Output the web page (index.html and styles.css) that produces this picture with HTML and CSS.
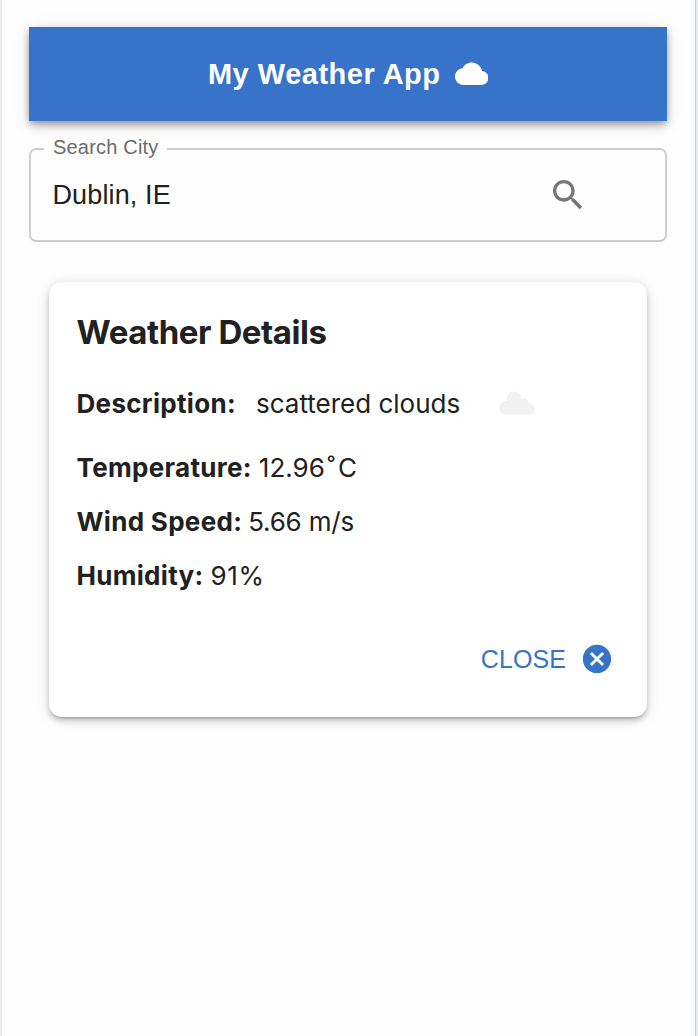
FILE: index.html
```html
<!DOCTYPE html>
<html lang="en">
<head>
<meta charset="utf-8">
<title>My Weather App</title>
<link rel="stylesheet" href="styles.css">
</head>
<body>
<main class="app">
  <header class="app-bar">
    <h1 class="app-title">My Weather App</h1>
    <svg class="cloud-icon" viewBox="0 0 24 24"><path d="M19.35 10.04C18.67 6.59 15.64 4 12 4 9.11 4 6.6 5.64 5.35 8.04 2.34 8.36 0 10.91 0 14c0 3.31 2.69 6 6 6h13c2.76 0 5-2.24 5-5 0-2.64-2.05-4.78-4.65-4.96z"/></svg>
  </header>
  <fieldset class="search">
    <legend class="search-label"><span class="label-text">Search City</span></legend>
    <div class="search-row">
      <span class="search-value">Dublin, IE</span>
      <svg class="search-icon" viewBox="0 0 24 24"><path d="M15.5 14h-.79l-.28-.27C15.41 12.59 16 11.11 16 9.5 16 5.91 13.09 3 9.5 3S3 5.91 3 9.5 5.91 16 9.5 16c1.61 0 3.09-.59 4.23-1.57l.27.28v.79l5 4.99L20.49 19l-4.99-5zm-6 0C7.01 14 5 11.99 5 9.5S7.01 5 9.5 5 14 7.01 14 9.5 11.99 14 9.5 14z"/></svg>
    </div>
  </fieldset>
  <section class="card">
    <h2 class="card-title">Weather Details</h2>
    <div class="row description">
      <b class="name">Description:</b>
      <span class="value">scattered clouds</span>
      <svg class="weather-icon" viewBox="0 0 36 24"><circle cx="15" cy="7.800" r="7.300"/><circle cx="6.800" cy="16.600" r="6.800"/><circle cx="24.300" cy="12.600" r="5.700"/><circle cx="30.700" cy="18.100" r="5.300"/><path d="M7 12h19l4.700 1v10.400H6.800z"/></svg>
    </div>
    <div class="row"><b class="name">Temperature:</b><span class="value">12.96<span class="degree">˚</span>C</span></div>
    <div class="row wind"><b class="name">Wind Speed:</b><span class="value value-wind">5.66 m/s</span></div>
    <div class="row"><b class="name">Humidity:</b><span class="value value-humidity">91%</span></div>
    <div class="actions">
      <span class="close-label">CLOSE</span>
      <svg class="close-icon" viewBox="0 0 24 24"><path d="M12 2C6.470 2 2 6.470 2 12s4.470 10 10 10 10-4.470 10-10S17.530 2 12 2zm5 13.590L15.590 17 12 13.410 8.410 17 7 15.590 10.590 12 7 8.410 8.410 7 12 10.590 15.590 7 17 8.410 13.410 12 17 15.590z"/></svg>
    </div>
  </section>
</main>
</body>
</html>
```
FILE: styles.css
```css
* { box-sizing: border-box; }
body {
  margin: 0;
  background: #e9eaef;
  color: #212121;
  font-family: "Liberation Sans", Arial, sans-serif;
}
.app {
  width: 694px;
  height: 1036px;
  margin-left: 2px;
  padding: 27px 28px 0 27px;
  background: #fefefe;
  border-right: 1px solid #cdcfd7;
}
.app-bar {
  height: 94px;
  display: flex;
  align-items: center;
  justify-content: center;
  gap: 14px;
  background: #3873ca;
  box-shadow: 0 3px 7px -1px rgba(0,0,0,.3), 0 6px 9px rgba(0,0,0,.13), 0 2px 17px rgba(0,0,0,.1);
}
.app-title {
  margin: 0;
  color: #fff;
  font-size: 29px;
  line-height: 34px;
  letter-spacing: .5px;
  white-space: nowrap;
}
.cloud-icon { width: 33.5px; height: 33.5px; fill: #fff; }
.search {
  height: 105px;
  margin: 16px 0 0;
  padding: 0 0 0 13px;
  border: 2px solid #cecece;
  border-radius: 7px;
}
.search-label {
  height: 23px;
  padding: 0 8px 0 9px;
  color: #6b6b6b;
  font-size: 20px;
  line-height: 21px;
}
.label-text { letter-spacing: .2px; }
.search-row {
  height: 70px;
  padding: 0 77px 0 8.5px;
  display: flex;
  align-items: center;
  justify-content: space-between;
}
.search-value { font-size: 27px; line-height: 32px; letter-spacing: .12px; }
.search-icon { width: 40px; height: 40px; fill: #757575; }
.card {
  height: 435px;
  margin: 40px 20px 0;
  padding: 28px 28px 28px 27.5px;
  background: #fff;
  border-radius: 13px;
  font-family: Inter, sans-serif;
  box-shadow: 0 3px 3px -2px rgba(0,0,0,.24), 0 4px 6px rgba(0,0,0,.17), 0 1px 14px rgba(0,0,0,.12);
}
.card-title {
  margin: 0 0 29px;
  font-size: 33px;
  line-height: 44px;
  font-weight: 700;
  letter-spacing: -.43px;
  white-space: nowrap;
}
.row {
  height: 40px;
  margin-bottom: 14px;
  display: flex;
  align-items: center;
  gap: 7px;
  font-size: 26px;
  white-space: nowrap;
}
.description { margin-bottom: 24px; gap: 20px; }
.wind { gap: 6px; }
.name { font-weight: 700; letter-spacing: .31px; }
.value { font-weight: 400; }
.degree { margin: 0 3px 0 2.5px; }
.value-wind { letter-spacing: -.2px; }
.value-humidity { letter-spacing: .6px; }
.weather-icon { width: 36px; height: 24px; margin-left: 18.5px; fill: #f1f1f1; }
.actions {
  margin-top: 47px;
  padding-right: 5px;
  display: flex;
  align-items: center;
  justify-content: flex-end;
  gap: 14px;
  color: #3873ca;
}
.close-label {
  font-family: "Liberation Sans", Arial, sans-serif;
  font-size: 25px;
  line-height: 34px;
  letter-spacing: .1px;
}
.close-icon { width: 34px; height: 34px; fill: #3873ca; }
```
